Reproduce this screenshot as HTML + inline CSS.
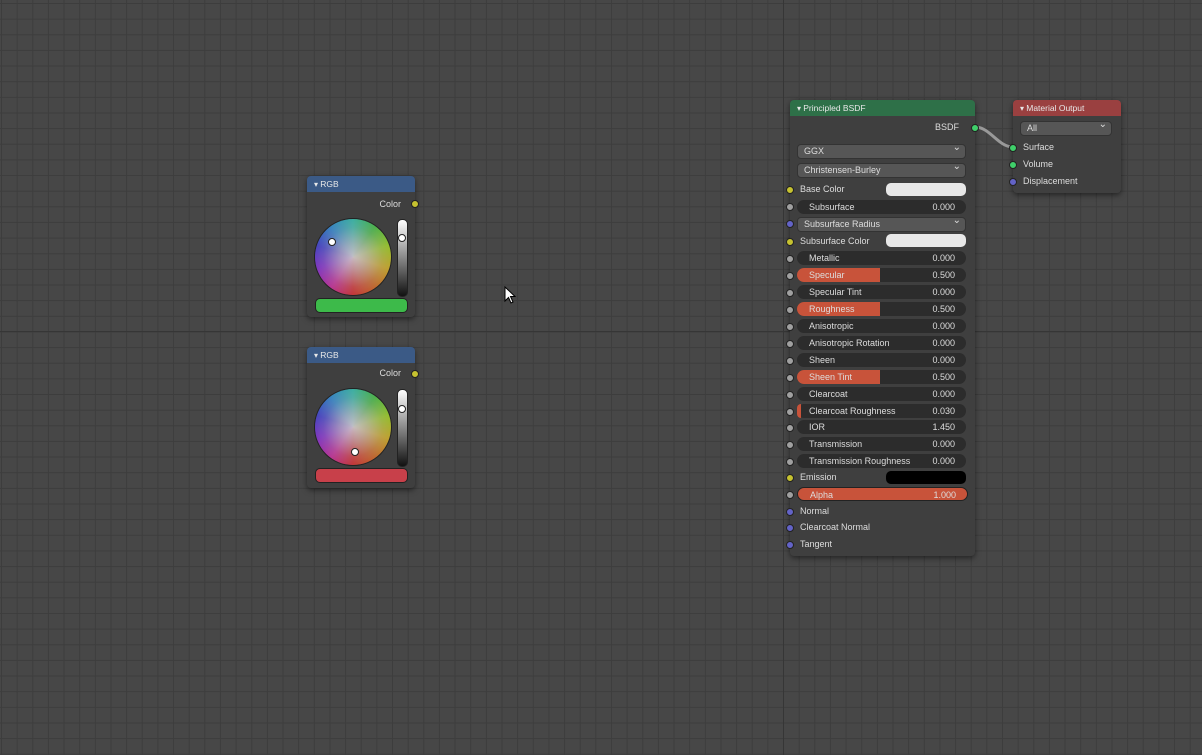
<!DOCTYPE html><html><head><style>
body{margin:0;width:1202px;height:755px;overflow:hidden;background:#474747;font-family:"Liberation Sans",sans-serif;font-size:9px;color:#ddd;position:relative}
.grid{position:absolute;inset:0;background-image:linear-gradient(#363636,#363636),linear-gradient(90deg,#363636,#363636),linear-gradient(#3d3d3d 1px,transparent 1px),linear-gradient(90deg,#3d3d3d 1px,transparent 1px);background-size:100% 1px,1px 100%,15.65px 15.65px,15.65px 15.65px;background-position:0 331px,783px 0,0 3px,1px 0;background-repeat:repeat-x,repeat-y,repeat,repeat}
.a{position:absolute}
.node{position:absolute;background:#3f3f3f;border-radius:4px;box-shadow:0 2px 6px rgba(0,0,0,.5)}
.hd{height:16px;border-radius:4px 4px 0 0;line-height:16px;padding-left:7px;color:#e8e8e8;font-size:8.5px}
.hd:before{content:"▾  ";font-size:8px}
.s{position:absolute;width:6px;height:6px;border-radius:50%;border:0.5px solid #222}
.f{position:absolute;left:7px;width:169px;height:14px;border-radius:7px;background:#2c2c2c;line-height:14px}
.f .l{position:absolute;left:12px}.f .v{position:absolute;right:11px}
.fill{position:absolute;left:0;top:0;bottom:0;background:#c8533a;border-radius:7px 0 0 7px}
.dd{position:absolute;left:7px;width:167px;height:13px;border-radius:4px;background:#565656;border:1px solid #333;line-height:13px;padding-left:0}
.dd span{position:absolute;left:6px}.dd:after{content:"⌄";position:absolute;right:4px;top:-4px;font-size:10px}
.lb{position:absolute;left:10px}
.sw{position:absolute;left:96px;width:80px;height:13px;border-radius:5px;background:#e8e8e8}
.wheel{position:absolute;left:8px;width:76px;height:76px;border-radius:50%;background:radial-gradient(circle,rgba(200,192,200,.95) 0%,rgba(190,180,190,.7) 25%,rgba(180,170,180,.25) 55%,rgba(255,255,255,0) 80%),conic-gradient(from 180deg,#c42a2a,#b82a90,#7a2ac0,#3a3ac0,#2a80c0,#30b0a0,#40b040,#90c020,#c0a020,#c06020,#c42a2a);box-shadow:0 0 0 1px #222}
</style></head><body><div class="grid"></div>

<svg class="a" style="left:0;top:0" width="1202" height="755"><path d="M975 127 C990 127 998 147 1013 147" stroke="#999" stroke-width="3" fill="none"/></svg>

<div class="node" style="left:307px;top:176px;width:108px;height:141px">
<div class="hd" style="background:#3b5a86">RGB</div>
<div class="a" style="right:14px;top:23px">Color</div>
<div class="s" style="left:104px;top:24px;background:#c6c230"></div>
<div class="wheel" style="top:43px"></div>
<div class="a" style="left:21px;top:62px;width:6px;height:6px;border-radius:50%;background:#fff;border:1px solid #222"></div>
<div class="a" style="left:90px;top:43px;width:9px;height:76px;border-radius:5px;background:linear-gradient(#fff,#111);border:1px solid #222"></div>
<div class="a" style="left:91px;top:58px;width:6px;height:6px;border-radius:50%;background:#fff;border:1px solid #222"></div>
<div class="a" style="left:8px;top:122px;width:91px;height:13px;border-radius:5px;background:#3dba4a;border:1px solid #222"></div>
</div>

<div class="node" style="left:307px;top:347px;width:108px;height:141px">
<div class="hd" style="background:#3b5a86">RGB</div>
<div class="a" style="right:14px;top:21px">Color</div>
<div class="s" style="left:104px;top:23px;background:#c6c230"></div>
<div class="wheel" style="top:42px"></div>
<div class="a" style="left:44px;top:101px;width:6px;height:6px;border-radius:50%;background:#fff;border:1px solid #222"></div>
<div class="a" style="left:90px;top:42px;width:9px;height:76px;border-radius:5px;background:linear-gradient(#fff,#111);border:1px solid #222"></div>
<div class="a" style="left:91px;top:58px;width:6px;height:6px;border-radius:50%;background:#fff;border:1px solid #222"></div>
<div class="a" style="left:8px;top:121px;width:91px;height:13px;border-radius:5px;background:#c8404a;border:1px solid #222"></div>
</div>

<svg class="a" style="left:504px;top:286px" width="14" height="20"><path d="M1 1 L1 15 L4.5 11.5 L7 17 L9 16 L6.5 10.5 L11 10.5 Z" fill="#fff" stroke="#000" stroke-width="1"/></svg>

<div class="node" style="left:790px;top:100px;width:185px;height:456px">
<div class="hd" style="background:#2e7048">Principled BSDF</div>
<div class="a" style="right:16px;top:22px">BSDF</div>
<div class="s" style="left:181px;top:24px;background:#3fcf6a"></div>
<div class="dd" style="top:44px"><span>GGX</span></div>
<div class="dd" style="top:63px"><span>Christensen-Burley</span></div>

<div class="s" style="left:-4px;top:86px;background:#c6c230"></div><div class="lb" style="top:84px">Base Color</div><div class="sw" style="top:83px"></div>
<div class="s" style="left:-4px;top:103px;background:#a0a0a0"></div><div class="f" style="top:100px"><span class="l">Subsurface</span><span class="v">0.000</span></div>
<div class="s" style="left:-4px;top:120px;background:#6363c7"></div><div class="dd" style="top:117px"><span>Subsurface Radius</span></div>
<div class="s" style="left:-4px;top:138px;background:#c6c230"></div><div class="lb" style="top:136px">Subsurface Color</div><div class="sw" style="top:134px"></div>

<div class="s" style="left:-4px;top:155px;background:#a0a0a0"></div><div class="f" style="top:151px"><span class="l">Metallic</span><span class="v">0.000</span></div>
<div class="s" style="left:-4px;top:172px;background:#a0a0a0"></div><div class="f" style="top:168px"><div class="fill" style="width:83px"></div><span class="l">Specular</span><span class="v">0.500</span></div>
<div class="s" style="left:-4px;top:189px;background:#a0a0a0"></div><div class="f" style="top:185px"><span class="l">Specular Tint</span><span class="v">0.000</span></div>
<div class="s" style="left:-4px;top:206px;background:#a0a0a0"></div><div class="f" style="top:202px"><div class="fill" style="width:83px"></div><span class="l">Roughness</span><span class="v">0.500</span></div>
<div class="s" style="left:-4px;top:223px;background:#a0a0a0"></div><div class="f" style="top:219px"><span class="l">Anisotropic</span><span class="v">0.000</span></div>
<div class="s" style="left:-4px;top:240px;background:#a0a0a0"></div><div class="f" style="top:236px"><span class="l">Anisotropic Rotation</span><span class="v">0.000</span></div>
<div class="s" style="left:-4px;top:257px;background:#a0a0a0"></div><div class="f" style="top:253px"><span class="l">Sheen</span><span class="v">0.000</span></div>
<div class="s" style="left:-4px;top:274px;background:#a0a0a0"></div><div class="f" style="top:270px"><div class="fill" style="width:83px"></div><span class="l">Sheen Tint</span><span class="v">0.500</span></div>
<div class="s" style="left:-4px;top:291px;background:#a0a0a0"></div><div class="f" style="top:287px"><span class="l">Clearcoat</span><span class="v">0.000</span></div>
<div class="s" style="left:-4px;top:308px;background:#a0a0a0"></div><div class="f" style="top:304px"><div class="fill" style="width:4px"></div><span class="l">Clearcoat Roughness</span><span class="v">0.030</span></div>
<div class="s" style="left:-4px;top:324px;background:#a0a0a0"></div><div class="f" style="top:320px"><span class="l">IOR</span><span class="v">1.450</span></div>
<div class="s" style="left:-4px;top:341px;background:#a0a0a0"></div><div class="f" style="top:337px"><span class="l">Transmission</span><span class="v">0.000</span></div>
<div class="s" style="left:-4px;top:358px;background:#a0a0a0"></div><div class="f" style="top:354px"><span class="l">Transmission Roughness</span><span class="v">0.000</span></div>
<div class="s" style="left:-4px;top:374px;background:#c6c230"></div><div class="lb" style="top:372px">Emission</div><div class="sw" style="top:371px;background:#000"></div>
<div class="s" style="left:-4px;top:391px;background:#a0a0a0"></div><div class="f" style="top:387px;background:#c8533a;border:1px solid #222;height:12px"><span class="l">Alpha</span><span class="v">1.000</span></div>
<div class="s" style="left:-4px;top:408px;background:#6363c7"></div><div class="lb" style="top:406px">Normal</div>
<div class="s" style="left:-4px;top:424px;background:#6363c7"></div><div class="lb" style="top:422px">Clearcoat Normal</div>
<div class="s" style="left:-4px;top:441px;background:#6363c7"></div><div class="lb" style="top:439px">Tangent</div>
</div>

<div class="node" style="left:1013px;top:100px;width:108px;height:93px">
<div class="hd" style="background:#9a4040">Material Output</div>
<div class="dd" style="top:21px;width:90px"><span>All</span></div>
<div class="s" style="left:-4px;top:44px;background:#3fcf6a"></div><div class="lb" style="top:42px">Surface</div>
<div class="s" style="left:-4px;top:61px;background:#3fcf6a"></div><div class="lb" style="top:59px">Volume</div>
<div class="s" style="left:-4px;top:78px;background:#6363c7"></div><div class="lb" style="top:76px">Displacement</div>
</div>
</body></html>
